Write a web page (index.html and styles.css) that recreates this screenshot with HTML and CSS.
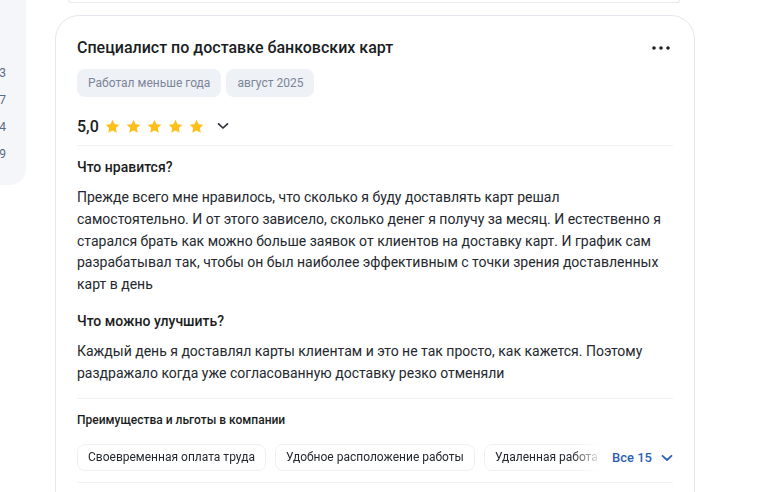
FILE: index.html
```html
<!DOCTYPE html>
<html lang="ru">
<head>
<meta charset="utf-8">
<link rel="stylesheet" href="styles.css">
</head>
<body>
<div class="page">
  <aside class="side">
    <div class="side-num">3</div>
    <div class="side-num">7</div>
    <div class="side-num">4</div>
    <div class="side-num">9</div>
  </aside>
  <main class="feed">
    <div class="prev-card"></div>
    <article class="card">
      <header class="card-head">
        <h2 class="title">Специалист по доставке банковских карт</h2>
        <button class="more" aria-label="Ещё">
          <svg width="18" height="4" viewBox="0 0 18 4"><circle cx="2" cy="2" r="1.8" fill="#1f2329"/><circle cx="9" cy="2" r="1.8" fill="#1f2329"/><circle cx="16" cy="2" r="1.8" fill="#1f2329"/></svg>
        </button>
      </header>
      <div class="tags">
        <span class="tag">Работал меньше года</span>
        <span class="tag">август 2025</span>
      </div>
      <div class="rating">
        <span class="score">5,0</span>
        <span class="stars">
          <svg class="star" viewBox="0 0 24 24"><path d="M12 2.5l2.9 6.2 6.8.8-5 4.7 1.3 6.7L12 17.6l-6 3.3 1.3-6.7-5-4.7 6.8-.8z" fill="#ffbf1a"/></svg>
          <svg class="star" viewBox="0 0 24 24"><path d="M12 2.5l2.9 6.2 6.8.8-5 4.7 1.3 6.7L12 17.6l-6 3.3 1.3-6.7-5-4.7 6.8-.8z" fill="#ffbf1a"/></svg>
          <svg class="star" viewBox="0 0 24 24"><path d="M12 2.5l2.9 6.2 6.8.8-5 4.7 1.3 6.7L12 17.6l-6 3.3 1.3-6.7-5-4.7 6.8-.8z" fill="#ffbf1a"/></svg>
          <svg class="star" viewBox="0 0 24 24"><path d="M12 2.5l2.9 6.2 6.8.8-5 4.7 1.3 6.7L12 17.6l-6 3.3 1.3-6.7-5-4.7 6.8-.8z" fill="#ffbf1a"/></svg>
          <svg class="star" viewBox="0 0 24 24"><path d="M12 2.5l2.9 6.2 6.8.8-5 4.7 1.3 6.7L12 17.6l-6 3.3 1.3-6.7-5-4.7 6.8-.8z" fill="#ffbf1a"/></svg>
        </span>
        <svg class="chev" width="12" height="8" viewBox="0 0 12 8"><path d="M1.5 1.8L6 6l4.5-4.2" fill="none" stroke="#2a2f38" stroke-width="1.7" stroke-linecap="round" stroke-linejoin="round"/></svg>
      </div>
      <div class="divider"></div>
      <section class="block">
        <h3 class="block-title">Что нравится?</h3>
        <p class="text">Прежде всего мне нравилось, что сколько я буду доставлять карт решал самостоятельно. И от этого зависело, сколько денег я получу за месяц. И естественно я старался брать как можно больше заявок от клиентов на доставку карт. И график сам разрабатывал так, чтобы он был наиболее эффективным с точки зрения доставленных карт в день</p>
      </section>
      <section class="block">
        <h3 class="block-title">Что можно улучшить?</h3>
        <p class="text">Каждый день я доставлял карты клиентам и это не так просто, как кажется. Поэтому раздражало когда уже согласованную доставку резко отменяли</p>
      </section>
      <div class="divider divider-benefits"></div>
      <h4 class="benefits-title">Преимущества и льготы в компании</h4>
      <div class="benefits">
        <div class="chips">
          <span class="chip">Своевременная оплата труда</span>
          <span class="chip">Удобное расположение работы</span>
          <span class="chip">Удаленная работа</span>
        </div>
        <button class="all">Все 15
          <svg width="12" height="8" viewBox="0 0 12 8"><path d="M1.5 1.8L6 6l4.5-4.2" fill="none" stroke="#2d5fb3" stroke-width="1.8" stroke-linecap="round" stroke-linejoin="round"/></svg>
        </button>
      </div>
      <div class="divider divider-bottom"></div>
    </article>
  </main>
</div>
</body>
</html>
```

FILE: styles.css
```css
* { box-sizing: border-box; }
html, body { margin: 0; padding: 0; background: #ffffff; }
body {
  font-family: Roboto, "Noto Sans", Arial, sans-serif;
  color: #1f2329;
  width: 768px;
  height: 492px;
  overflow: hidden;
}
.page {
  display: flex;
  align-items: flex-start;
}
.side {
  width: 26px;
  height: 185px;
  background: #f4f6fa;
  border-radius: 0 0 16px 0;
  padding-top: 64px;
  padding-right: 20px;
  display: flex;
  flex-direction: column;
  align-items: flex-end;
  gap: 9px;
  flex: none;
}
.side-num {
  font-size: 12px;
  line-height: 18px;
  color: #5c6a82;
  width: 10px;
  text-align: right;
}
.feed {
  margin-left: 29px;
  width: 640px;
  flex: none;
}
.prev-card {
  margin-left: 13px;
  width: 612px;
  height: 3px;
  border: 1px solid #e6e9ef;
  border-top: none;
  border-radius: 0 0 10px 10px;
  background: #fff;
}
.card {
  margin-top: 12px;
  border: 1px solid #e4e7ee;
  border-radius: 24px;
  padding: 20px 21px 0 21px;
  background: #fff;
  height: 520px;
}
.card-head {
  display: flex;
  align-items: center;
  justify-content: space-between;
}
.title {
  margin: 0;
  font-size: 16px;
  line-height: 24px;
  font-weight: 500;
  color: #1a1d22;
}
.more {
  border: none;
  background: none;
  padding: 0;
  margin-right: 3px;
  width: 18px;
  height: 18px;
  display: flex;
  align-items: center;
  justify-content: center;
}
.tags {
  display: flex;
  gap: 5px;
  margin-top: 9px;
}
.tag {
  background: #eef1f6;
  color: #7b8597;
  font-size: 12px;
  line-height: 28px;
  padding: 0 11px;
  border-radius: 8px;
}
.rating {
  display: flex;
  align-items: center;
  margin-top: 13px;
  height: 32px;
}
.score {
  font-size: 16px;
  font-weight: 500;
  color: #1a1d22;
  margin-right: 5px;
}
.stars {
  display: flex;
  gap: 4px;
}
.star {
  width: 17px;
  height: 17px;
}
.chev {
  margin-left: 12px;
}
.divider {
  height: 1px;
  background: #f0f2f5;
  margin-top: 3px;
}
.block { margin-top: 10px; }
.block + .block { margin-top: 14px; }
.block-title {
  margin: 0;
  font-size: 14px;
  line-height: 22px;
  font-weight: 500;
  color: #1a1d22;
}
.text {
  margin: 9px 0 0 0;
  font-size: 14px;
  line-height: 21.75px;
  color: #24282e;
}
.divider-benefits { margin-top: 14px; }
.benefits-title {
  margin: 11px 0 0 0;
  font-size: 12px;
  line-height: 20px;
  font-weight: 500;
  color: #1a1d22;
}
.benefits {
  display: flex;
  align-items: center;
  margin-top: 14px;
}
.chips {
  display: flex;
  gap: 9px;
  width: 525px;
  overflow: hidden;
  flex: none;
  -webkit-mask-image: linear-gradient(to right, #000 495px, transparent 525px);
  mask-image: linear-gradient(to right, #000 495px, transparent 525px);
}
.chip {
  flex: none;
  border: 1px solid #edf0f3;
  border-radius: 8px;
  font-size: 12px;
  line-height: 25px;
  padding: 0 10px;
  color: #24282e;
  background: #fff;
}
.all {
  border: none;
  background: none;
  padding: 0;
  margin-left: 10px;
  font-family: inherit;
  font-size: 13px;
  font-weight: 500;
  color: #2d5fb3;
  display: flex;
  align-items: center;
  gap: 9px;
  white-space: nowrap;
  flex: none;
}
.divider-bottom { margin-top: 11px; }
```
